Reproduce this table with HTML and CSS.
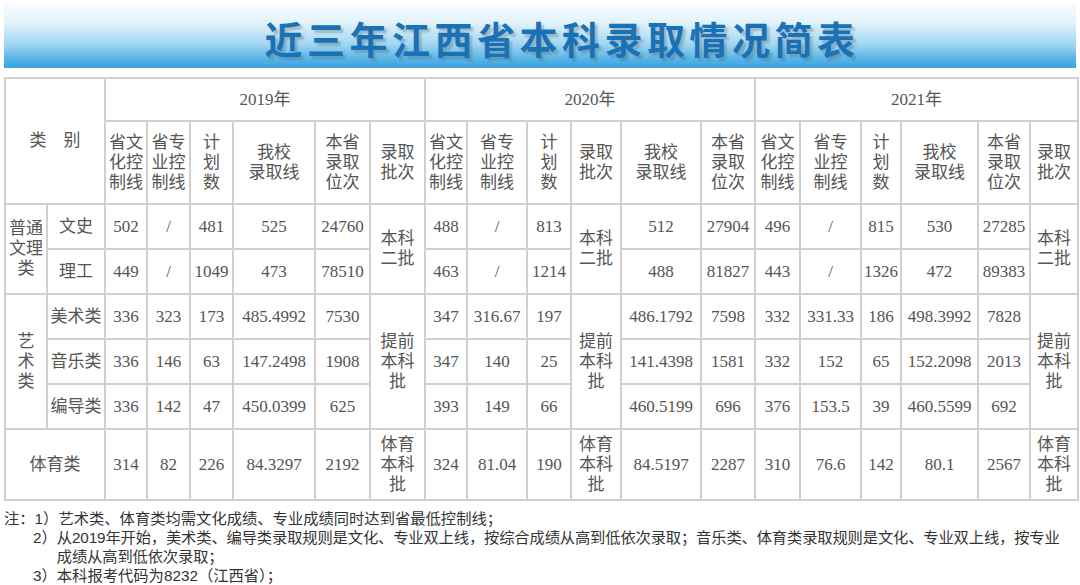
FILE: index.html
```html
<!DOCTYPE html>
<html lang="zh-CN">
<head>
<meta charset="utf-8">
<title>近三年江西省本科录取情况简表</title>
<link rel="stylesheet" href="styles.css">
</head>
<body>
<div class="page">
  <header class="banner">
    <h1 class="title">近三年江西省本科录取情况简表</h1>
  </header>

  <table class="admit">
    <colgroup>
      <col class="w42"><col class="w58">
      <col class="w42"><col class="w43"><col class="w43"><col class="w82"><col class="w55"><col class="w55">
      <col class="w42"><col class="w60"><col class="w44"><col class="w50"><col class="w80"><col class="w54">
      <col class="w45"><col class="w61"><col class="w40"><col class="w77"><col class="w52"><col class="w48">
    </colgroup>
    <tr class="r-year">
      <td colspan="2" rowspan="2">类　别</td>
      <td colspan="6">2019年</td>
      <td colspan="6">2020年</td>
      <td colspan="6">2021年</td>
    </tr>
    <tr class="r-head">
      <td>省文<br>化控<br>制线</td>
      <td>省专<br>业控<br>制线</td>
      <td>计<br>划<br>数</td>
      <td>我校<br>录取线</td>
      <td>本省<br>录取<br>位次</td>
      <td>录取<br>批次</td>

      <td>省文<br>化控<br>制线</td>
      <td>省专<br>业控<br>制线</td>
      <td>计<br>划<br>数</td>
      <td>录取<br>批次</td>
      <td>我校<br>录取线</td>
      <td>本省<br>录取<br>位次</td>

      <td>省文<br>化控<br>制线</td>
      <td>省专<br>业控<br>制线</td>
      <td>计<br>划<br>数</td>
      <td>我校<br>录取线</td>
      <td>本省<br>录取<br>位次</td>
      <td>录取<br>批次</td>
    </tr>
    <tr class="r-data">
      <td rowspan="2">普通<br>文理<br>类</td>
      <td>文史</td>
      <td>502</td><td>/</td><td>481</td><td>525</td><td>24760</td>
      <td rowspan="2">本科<br>二批</td>
      <td>488</td><td>/</td><td>813</td>
      <td rowspan="2">本科<br>二批</td>
      <td>512</td><td>27904</td>
      <td>496</td><td>/</td><td>815</td><td>530</td><td>27285</td>
      <td rowspan="2">本科<br>二批</td>
    </tr>
    <tr class="r-data">
      <td>理工</td>
      <td>449</td><td>/</td><td>1049</td><td>473</td><td>78510</td>
      <td>463</td><td>/</td><td>1214</td>
      <td>488</td><td>81827</td>
      <td>443</td><td>/</td><td>1326</td><td>472</td><td>89383</td>
    </tr>
    <tr class="r-data">
      <td rowspan="3">艺<br>术<br>类</td>
      <td>美术类</td>
      <td>336</td><td>323</td><td>173</td><td>485.4992</td><td>7530</td>
      <td rowspan="3">提前<br>本科<br>批</td>
      <td>347</td><td>316.67</td><td>197</td>
      <td rowspan="3">提前<br>本科<br>批</td>
      <td>486.1792</td><td>7598</td>
      <td>332</td><td>331.33</td><td>186</td><td>498.3992</td><td>7828</td>
      <td rowspan="3">提前<br>本科<br>批</td>
    </tr>
    <tr class="r-data">
      <td>音乐类</td>
      <td>336</td><td>146</td><td>63</td><td>147.2498</td><td>1908</td>
      <td>347</td><td>140</td><td>25</td>
      <td>141.4398</td><td>1581</td>
      <td>332</td><td>152</td><td>65</td><td>152.2098</td><td>2013</td>
    </tr>
    <tr class="r-data">
      <td>编导类</td>
      <td>336</td><td>142</td><td>47</td><td>450.0399</td><td>625</td>
      <td>393</td><td>149</td><td>66</td>
      <td>460.5199</td><td>696</td>
      <td>376</td><td>153.5</td><td>39</td><td>460.5599</td><td>692</td>
    </tr>
    <tr class="r-sport">
      <td colspan="2">体育类</td>
      <td>314</td><td>82</td><td>226</td><td>84.3297</td><td>2192</td>
      <td>体育<br>本科<br>批</td>
      <td>324</td><td>81.04</td><td>190</td>
      <td>体育<br>本科<br>批</td>
      <td>84.5197</td><td>2287</td>
      <td>310</td><td>76.6</td><td>142</td><td>80.1</td><td>2567</td>
      <td>体育<br>本科<br>批</td>
    </tr>
  </table>

  <div class="notes">
    <div class="note-row"><span class="note-lead">注：</span><span class="num">1）</span><span class="note-text">艺术类、体育类均需文化成绩、专业成绩同时达到省最低控制线；</span></div>
    <div class="note-row indent tight"><span class="num">2）</span><span class="note-text">从2019年开始，美术类、编导类录取规则是文化、专业双上线，按综合成绩从高到低依次录取；音乐类、体育类录取规则是文化、专业双上线，按专业<br>成绩从高到低依次录取；</span></div>
    <div class="note-row indent"><span class="num">3）</span><span class="note-text">本科报考代码为8232（江西省）；</span></div>
  </div>
</div>
</body>
</html>
```

FILE: styles.css
```css
html, body {
  margin: 0;
  padding: 0;
  background: #ffffff;
}

.page {
  width: 1080px;
  height: 585px;
  overflow: hidden;
  padding: 4px 0 0 4px;
  box-sizing: border-box;
}

.banner {
  width: 1072px;
  height: 64px;
  box-sizing: border-box;
  padding-left: 44px;
  background: linear-gradient(to bottom, #f9fdfe 0%, #e0f2fa 30%, #a3d7f2 62%, #52b1e5 88%, #3aa4df 100%);
  display: flex;
  align-items: center;
  justify-content: center;
}

.title {
  margin: 4px 0 0 0;
  font-family: "Noto Sans CJK SC", "Noto Sans", sans-serif;
  font-weight: 700;
  font-size: 38px;
  line-height: 44px;
  letter-spacing: 4.5px;
  color: #1a72b6;
  text-shadow: 3px 3px 2px rgba(90, 100, 110, 0.35);
}

.admit {
  margin-top: 9px;
  width: 1073px;
  table-layout: fixed;
  border-collapse: collapse;
  font-family: "Liberation Serif", "Noto Sans CJK SC", serif;
  font-size: 17px;
  line-height: 20px;
  color: #555555;
}

.admit td {
  border: 2px solid #d0d0d0;
  padding: 0;
  text-align: center;
  vertical-align: middle;
  white-space: nowrap;
}

.r-year { height: 43px; }
.r-head { height: 83px; }
.r-data { height: 45px; }
.r-sport { height: 71px; }

.w40 { width: 40px; }
.w42 { width: 42px; }
.w43 { width: 43px; }
.w44 { width: 44px; }
.w45 { width: 45px; }
.w48 { width: 48px; }
.w50 { width: 50px; }
.w52 { width: 52px; }
.w54 { width: 54px; }
.w55 { width: 55px; }
.w58 { width: 58px; }
.w60 { width: 60px; }
.w61 { width: 61px; }
.w77 { width: 77px; }
.w80 { width: 80px; }
.w82 { width: 82px; }

.notes {
  margin-top: 8px;
  font-family: "Liberation Sans", "Noto Sans CJK SC", sans-serif;
  font-size: 15.3px;
  line-height: 19px;
  color: #333333;
}

.note-row {
  display: flex;
  white-space: nowrap;
}

.note-row.indent {
  padding-left: 29px;
}

.note-row.tight .note-text {
  letter-spacing: -0.15px;
}

.num {
  flex: none;
}

.note-text {
  flex: none;
}
```
